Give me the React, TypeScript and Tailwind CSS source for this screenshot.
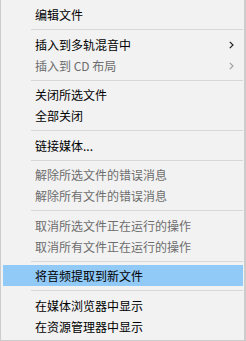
import React from 'react';

type Entry =
  | { kind: 'item'; label: string; disabled?: boolean; submenu?: boolean; active?: boolean }
  | { kind: 'sep'; tall?: boolean };

const entries: Entry[] = [
  { kind: 'item', label: '编辑文件' },
  { kind: 'sep', tall: true },
  { kind: 'item', label: '插入到多轨混音中', submenu: true },
  { kind: 'item', label: '插入到 CD 布局', submenu: true, disabled: true },
  { kind: 'sep' },
  { kind: 'item', label: '关闭所选文件' },
  { kind: 'item', label: '全部关闭' },
  { kind: 'sep', tall: true },
  { kind: 'item', label: '链接媒体...' },
  { kind: 'sep' },
  { kind: 'item', label: '解除所选文件的错误消息', disabled: true },
  { kind: 'item', label: '解除所有文件的错误消息', disabled: true },
  { kind: 'sep', tall: true },
  { kind: 'item', label: '取消所选文件正在运行的操作', disabled: true },
  { kind: 'item', label: '取消所有文件正在运行的操作', disabled: true },
  { kind: 'sep' },
  { kind: 'item', label: '将音频提取到新文件', active: true },
  { kind: 'sep', tall: true },
  { kind: 'item', label: '在媒体浏览器中显示' },
  { kind: 'item', label: '在资源管理器中显示' },
];

const Chevron = ({ disabled }: { disabled?: boolean }) => (
  <svg width="5" height="8" viewBox="0 0 5 8" className="shrink-0">
    <path
      d="M0.8 0.8 L4 4 L0.8 7.2"
      fill="none"
      stroke={disabled ? '#a0a0a0' : '#222'}
      strokeWidth="1.2"
    />
  </svg>
);

export default function App() {
  return (
    <div className="w-[246px] h-[341px] bg-white">
      <div
        className="w-full h-full bg-[#f2f2f2] border-l border-r-2 border-b border-[#cccccc] pl-[2px] pr-px pt-[4px] flex flex-col"
        style={{ fontFamily: '"Noto Sans CJK SC", "Noto Sans", sans-serif' }}
      >
        {entries.map((e, i) =>
          e.kind === 'sep' ? (
            <div
              key={i}
              className={`${e.tall ? 'h-[9px]' : 'h-[8px]'} shrink-0 flex items-center pl-[28px]`}
            >
              <div className="h-px w-full bg-[#d7d7d7]" />
            </div>
          ) : (
            <div
              key={i}
              className={`h-[21px] shrink-0 flex items-center pl-[32px] pr-[9px] text-[12px] leading-none ${
                e.active ? 'bg-[#91c9f7]' : ''
              } ${e.disabled ? 'text-[#6d6d6d]' : 'text-black'}`}
            >
              <span className="flex-1 whitespace-nowrap">{e.label}</span>
              {e.submenu && <Chevron disabled={e.disabled} />}
            </div>
          )
        )}
      </div>
    </div>
  );
}
